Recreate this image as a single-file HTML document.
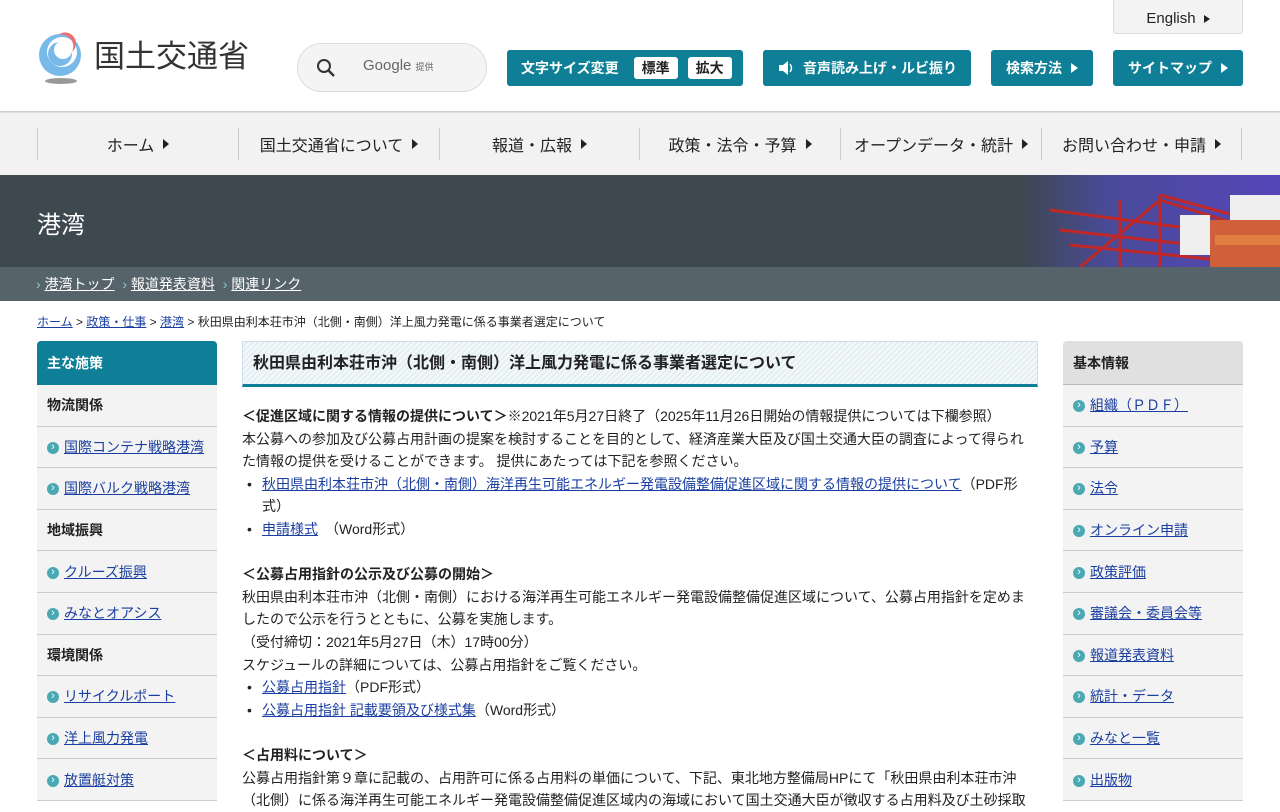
<!DOCTYPE html>
<html lang="ja"><head><meta charset="utf-8">
<style>
*{box-sizing:border-box;margin:0;padding:0}
body{width:1280px;height:800px;overflow:hidden;background:#fff;font-family:"Liberation Sans","Noto Sans CJK JP",sans-serif;color:#222;font-size:14px}
a{color:#1a3fa0;text-decoration:underline}
.abs{position:absolute}
.btn{position:absolute;top:50px;height:36px;background:#0e7f96;color:#fff;border-radius:3px;font-size:14px;font-weight:bold;display:flex;align-items:center;justify-content:center}
.tri{display:inline-block;width:0;height:0;border-left:7px solid currentColor;border-top:5px solid transparent;border-bottom:5px solid transparent;margin-left:9px}
.nav{position:absolute;top:112px;left:0;width:1280px;height:63px;background:#f2f2f2;border-top:1px solid #ddd}
.nav div{position:absolute;top:15px;height:32px;border-left:1px solid #ccc;display:flex;align-items:center;justify-content:center;font-size:16px;color:#222}
.side{position:absolute;top:341px;width:180px}
.side .h{height:44px;background:#0e7f96;color:#fff;font-weight:bold;padding-left:10px;line-height:44px;border-radius:4px 4px 0 0}
.side .r{height:41.6px;background:#f3f3f3;border-bottom:1px solid #ccc;display:flex;align-items:center;padding-left:10px;font-size:14px}
.side .r.b{font-weight:bold}
.side .r a{padding-left:17px;position:relative}
.side .r a:before{content:"›";position:absolute;left:0;top:50%;margin-top:-5px;width:12px;height:12px;border-radius:50%;background:#4aa8b3;color:#fff;font-size:11px;line-height:11px;text-align:center}
.main{position:absolute;left:242px;top:405px;width:790px;line-height:22.6px;font-size:14px}
.main ul{list-style:none}
.main li{padding-left:20px;position:relative}
.main li:before{content:"•";position:absolute;left:5px}
</style></head><body>
<svg class="abs" style="left:36px;top:32px" width="52" height="56" viewBox="0 0 52 56">
<ellipse cx="25" cy="49" rx="16" ry="3" fill="#999"/>
<circle cx="24" cy="23" r="21" fill="#77b9e8"/>
<circle cx="26" cy="20" r="15" fill="#fff"/>
<circle cx="24" cy="22" r="12" fill="#77b9e8"/>
<circle cx="27" cy="18" r="9" fill="#fff"/>
<path d="M22 3 A12 12 0 0 1 36 20 A10 10 0 0 0 22 3Z" fill="#ef6f6f"/>
</svg>
<div class="abs" style="left:94px;top:37px;font-size:31px;color:#333;line-height:40px">国土交通省</div>
<div class="abs" style="left:297px;top:43px;width:190px;height:49px;border:1px solid #ddd;border-radius:25px;background:#f4f4f4"></div>
<svg class="abs" style="left:316px;top:58px" width="20" height="20"><circle cx="8" cy="8" r="6" stroke="#333" stroke-width="2" fill="none"/><line x1="12.5" y1="12.5" x2="18" y2="18" stroke="#333" stroke-width="2.4"/></svg>
<div class="abs" style="left:363px;top:57px;font-size:15px;color:#666">Google <span style="font-size:9px">提供</span></div>
<div class="abs" style="left:1113px;top:0;width:130px;height:34px;background:#f3f3f3;border:1px solid #ddd;border-top:none;border-radius:0 0 3px 3px;display:flex;align-items:center;justify-content:center;font-size:15px;color:#222;padding-top:4px">English<span class="tri" style="border-left-width:6px;border-top-width:4px;border-bottom-width:4px;margin-left:8px"></span></div>
<div class="btn" style="left:507px;width:236px;justify-content:flex-start;padding-left:14px">文字サイズ変更<span style="background:#fff;color:#222;border-radius:3px;padding:0 8px;margin-left:15px;line-height:22px">標準</span><span style="background:#fff;color:#222;border-radius:3px;padding:0 8px;margin-left:10px;line-height:22px">拡大</span></div>
<div class="btn" style="left:763px;width:208px"><svg width="18" height="16" style="margin-right:8px"><path d="M2 5h4l5-4v14l-5-4H2z" fill="#fff"/><path d="M13 4q3 4 0 8" stroke="#fff" fill="none" stroke-width="1.4"/></svg>音声読み上げ・ルビ振り</div>
<div class="btn" style="left:991px;width:102px">検索方法<span class="tri"></span></div>
<div class="btn" style="left:1113px;width:130px">サイトマップ<span class="tri"></span></div>
<div class="abs" style="left:0;top:111px;width:1280px;height:1px;background:#ccc"></div>
<div class="nav">
<div style="left:37px;width:201px">ホーム<span class="tri" style="border-left-width:6px"></span></div>
<div style="left:238px;width:201px">国土交通省について<span class="tri" style="border-left-width:6px"></span></div>
<div style="left:439px;width:200px">報道・広報<span class="tri" style="border-left-width:6px"></span></div>
<div style="left:639px;width:201px">政策・法令・予算<span class="tri" style="border-left-width:6px"></span></div>
<div style="left:840px;width:201px">オープンデータ・統計<span class="tri" style="border-left-width:6px"></span></div>
<div style="left:1041px;width:201px;border-right:1px solid #ccc">お問い合わせ・申請<span class="tri" style="border-left-width:6px"></span></div>
</div>
<div class="abs" style="left:0;top:175px;width:1280px;height:92px;background:linear-gradient(90deg,#3d484f 0,#3d484f 1020px,#4a4a9a 1110px,#5546b8 1280px)"></div>
<svg class="abs" style="left:1040px;top:180px" width="240" height="87">
<g stroke="#c02828" stroke-width="3" fill="none"><path d="M10 30L200 55M20 50L200 70M30 65L180 80M80 20L80 87M120 15L120 87M40 87L120 20L200 45M120 15L230 45"/></g>
<rect x="140" y="35" width="30" height="40" fill="#eee"/>
<rect x="170" y="40" width="70" height="47" fill="#d0603a"/><rect x="190" y="15" width="50" height="25" fill="#eee"/><rect x="175" y="55" width="65" height="10" fill="#e08040"/>
</svg>
<div class="abs" style="left:37px;top:205px;font-size:24px;color:#fff">港湾</div>
<div class="abs" style="left:0;top:267px;width:1280px;height:34px;background:#56636a"></div>
<div class="abs" style="left:36px;top:274px;font-size:14px;color:#fff;line-height:20px"><span style="color:#8cc">›</span> <a style="color:#fff">港湾トップ</a>&nbsp; <span style="color:#8cc">›</span> <a style="color:#fff">報道発表資料</a>&nbsp; <span style="color:#8cc">›</span> <a style="color:#fff">関連リンク</a></div>
<div class="abs" style="left:37px;top:313px;font-size:12px;color:#222"><a>ホーム</a> &gt; <a>政策・仕事</a> &gt; <a>港湾</a> &gt; 秋田県由利本荘市沖（北側・南側）洋上風力発電に係る事業者選定について</div>
<div class="side" style="left:37px">
<div class="h">主な施策</div>
<div class="r b">物流関係</div>
<div class="r"><a>国際コンテナ戦略港湾</a></div>
<div class="r"><a>国際バルク戦略港湾</a></div>
<div class="r b">地域振興</div>
<div class="r"><a>クルーズ振興</a></div>
<div class="r"><a>みなとオアシス</a></div>
<div class="r b">環境関係</div>
<div class="r"><a>リサイクルポート</a></div>
<div class="r"><a>洋上風力発電</a></div>
<div class="r"><a>放置艇対策</a></div>
</div>
<div class="side" style="left:1063px">
<div class="h" style="background:#e0e0e0;color:#222;border-bottom:1px solid #bbb">基本情報</div>
<div class="r"><a>組織（ＰＤＦ）</a></div>
<div class="r"><a>予算</a></div>
<div class="r"><a>法令</a></div>
<div class="r"><a>オンライン申請</a></div>
<div class="r"><a>政策評価</a></div>
<div class="r"><a>審議会・委員会等</a></div>
<div class="r"><a>報道発表資料</a></div>
<div class="r"><a>統計・データ</a></div>
<div class="r"><a>みなと一覧</a></div>
<div class="r"><a>出版物</a></div>
</div>
<div class="abs" style="left:242px;top:341px;width:796px;height:46px;border:1px solid #cde;border-bottom:3px solid #0e7f96;background:repeating-linear-gradient(135deg,#f4f9fa 0,#f4f9fa 2px,#e3eff2 2px,#e3eff2 4px);font-size:16px;font-weight:bold;padding-left:10px;line-height:44px">秋田県由利本荘市沖（北側・南側）洋上風力発電に係る事業者選定について</div>
<div class="main">
<p><b>＜促進区域に関する情報の提供について＞</b>※2021年5月27日終了（2025年11月26日開始の情報提供については下欄参照）</p>
<p>本公募への参加及び公募占用計画の提案を検討することを目的として、経済産業大臣及び国土交通大臣の調査によって得られ<br>た情報の提供を受けることができます。 提供にあたっては下記を参照ください。</p>
<ul><li><a>秋田県由利本荘市沖（北側・南側）海洋再生可能エネルギー発電設備整備促進区域に関する情報の提供について</a>（PDF形<br>式）</li>
<li><a>申請様式</a>　（Word形式）</li></ul>
<p>&nbsp;</p>
<p><b>＜公募占用指針の公示及び公募の開始＞</b></p>
<p>秋田県由利本荘市沖（北側・南側）における海洋再生可能エネルギー発電設備整備促進区域について、公募占用指針を定めま<br>したので公示を行うとともに、公募を実施します。</p>
<p>（受付締切：2021年5月27日（木）17時00分）</p>
<p>スケジュールの詳細については、公募占用指針をご覧ください。</p>
<ul><li><a>公募占用指針</a>（PDF形式）</li>
<li><a>公募占用指針 記載要領及び様式集</a>（Word形式）</li></ul>
<p>&nbsp;</p>
<p><b>＜占用料について＞</b></p>
<p>公募占用指針第９章に記載の、占用許可に係る占用料の単価について、下記、東北地方整備局HPにて「秋田県由利本荘市沖<br>（北側）に係る海洋再生可能エネルギー発電設備整備促進区域内の海域において国土交通大臣が徴収する占用料及び土砂採取</p>
</div>
</body></html>
